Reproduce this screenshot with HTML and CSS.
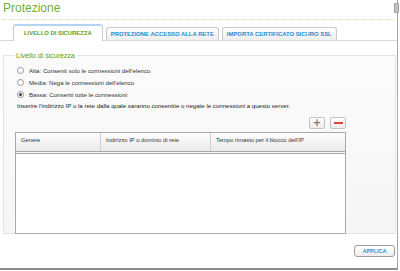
FILE: index.html
```html
<!DOCTYPE html>
<html lang="it">
<head>
    <meta charset="UTF-8">
    <title>Protezione</title>
    <link rel="stylesheet" href="styles.css">
</head>
<body>
    <div class="page">
        <div class="scroll-thumb"></div>
        <h1 class="title">Protezione</h1>
        <div class="tabs">
            <div class="tab active">LIVELLO DI SICUREZZA</div>
            <div class="tab">PROTEZIONE ACCESSO ALLA RETE</div>
            <div class="tab">IMPORTA CERTIFICATO SICURO SSL</div>
        </div>
        <div class="panel">
            <fieldset class="level">
                <legend>Livello di sicurezza</legend>
                <div class="options">
                    <label class="option"><span class="radio"></span>Alta: Consenti solo le connessioni dell'elenco</label>
                    <label class="option"><span class="radio"></span>Media: Nega le connessioni dell'elenco</label>
                    <label class="option"><span class="radio checked"></span>Bassa: Consenti tutte le connessioni</label>
                </div>
                <p class="info">Inserire l'indirizzo IP o la rete dalla quale saranno consentite o negate le connessioni a questo server.</p>
                <div class="list">
                    <div class="actions">
                        <button class="icon-btn add">+</button>
                        <button class="icon-btn remove"><span class="bar"></span></button>
                    </div>
                    <div class="table">
                        <div class="thead">
                            <div class="th col-type">Genere</div>
                            <div class="th col-ip">Indirizzo IP o dominio di rete</div>
                            <div class="th col-time">Tempo rimasto per il blocco dell'IP</div>
                        </div>
                        <div class="tbody"></div>
                    </div>
                </div>
            </fieldset>
        </div>
        <div class="footer">
            <button class="apply">APPLICA</button>
        </div>
    </div>
</body>
</html>
```

FILE: styles.css
```css
body {
    margin: 0;
    padding: 0;
    background: #fff;
    font-family: "Liberation Sans", Arial, sans-serif;
    color: #333;
}
.page {
    position: relative;
    width: 397px;
    height: 268px;
    border-right: 1px solid #a6a6a6;
    border-bottom: 2px solid #8c8c8c;
    display: flex;
    flex-direction: column;
}
.scroll-thumb {
    position: absolute;
    right: -2px;
    top: 3px;
    width: 3px;
    height: 8px;
    background: #c4c4c4;
    border: 1px solid #9a9a9a;
    border-radius: 1px;
}
.title {
    margin: 0 2px 0 3px;
    padding: 0 0 3px 0;
    height: 16px;
    font-size: 12px;
    line-height: 16px;
    font-weight: normal;
    color: #6fb03a;
    border-bottom: 1px dotted #d3e0ae;
}
.tabs {
    display: flex;
    align-items: flex-end;
    gap: 3px;
    margin-top: 4px;
    padding-left: 13px;
    height: 16px;
    position: relative;
    z-index: 1;
}
.tab {
    height: 12px;
    line-height: 12px;
    padding: 0 4px;
    font-size: 5.9px;
    font-weight: bold;
    color: #2a88cf;
    border: 1px solid #c9c9c9;
    border-bottom: none;
    border-radius: 3px 3px 0 0;
    background: linear-gradient(#ffffff, #eeeeee);
}
.tab.active {
    height: 14px;
    line-height: 15px;
    padding: 0 10px;
    color: #5aa125;
    background: #fff;
    border-top: 2px solid #b5d5ef;
    margin-bottom: -1px;
    padding-bottom: 1px;
}
.panel {
    border-top: 1px solid #d9d9d9;
    padding-top: 10px;
}
.level {
    margin: 0 1px 0 3px;
    padding: 0 0 8px 11px;
    border: 1px solid #e3e3e3;
    background: linear-gradient(#fbfbfb, #f6f6f6);
    height: 183px;
    box-sizing: border-box;
}
.level legend {
    padding: 0 2px 0 1px;
    font-size: 7px;
    line-height: 9px;
    color: #4f9f1d;
}
.options {
    margin-top: 4px;
    margin-left: 2px;
}
.option {
    display: flex;
    align-items: center;
    height: 12px;
    font-size: 6.1px;
}
.radio {
    width: 5px;
    height: 5px;
    border: 1px solid #8a96a8;
    border-radius: 50%;
    background: #fff;
    margin-right: 5px;
    display: flex;
    align-items: center;
    justify-content: center;
}
.radio.checked::after {
    content: "";
    width: 3px;
    height: 3px;
    border-radius: 50%;
    background: #3b3b3b;
}
.info {
    margin: 0 0 0 2px;
    height: 12px;
    line-height: 12px;
    font-size: 6.1px;
    color: #222;
}
.list {
    width: 331px;
    margin-top: 5px;
}
.actions {
    display: flex;
    justify-content: flex-end;
    gap: 5px;
    height: 12px;
}
.icon-btn {
    width: 16px;
    height: 12px;
    padding: 0;
    border: 1px solid #c2c2c2;
    border-radius: 2px;
    background: linear-gradient(#ffffff, #ececec);
    display: flex;
    align-items: center;
    justify-content: center;
    font-family: "DejaVu Sans", sans-serif;
    font-size: 10px;
    font-weight: bold;
    line-height: 10px;
    color: #777;
}
.remove .bar {
    width: 9px;
    height: 2px;
    background: #e0443a;
}
.table {
    margin-top: 3px;
    height: 102px;
    border: 1px solid #a9a9a9;
    box-sizing: border-box;
    background: #fff;
    display: flex;
    flex-direction: column;
}
.thead {
    display: flex;
    height: 18px;
    border-bottom: 3px double #a9a9a9;
    background: linear-gradient(#fdfdfd, #eaeaea);
}
.th {
    font-size: 5.8px;
    line-height: 14px;
    padding-left: 5px;
    color: #333;
    border-right: 1px solid #cfcfcf;
    box-sizing: border-box;
}
.col-type {
    width: 85px;
}
.col-ip {
    width: 110px;
}
.col-time {
    flex: 1;
    border-right: none;
}
.tbody {
    flex: 1;
}
.footer {
    flex: 1;
    display: flex;
    justify-content: flex-end;
    align-items: flex-start;
    padding: 11px 2px 0 0;
}
.apply {
    width: 41px;
    height: 12px;
    padding: 0;
    border: 1px solid #9d9d9d;
    border-radius: 3px;
    background: linear-gradient(#ffffff, #eeeeee);
    font-family: "Liberation Sans", Arial, sans-serif;
    font-size: 5.5px;
    font-weight: bold;
    color: #2a95dc;
}
```
